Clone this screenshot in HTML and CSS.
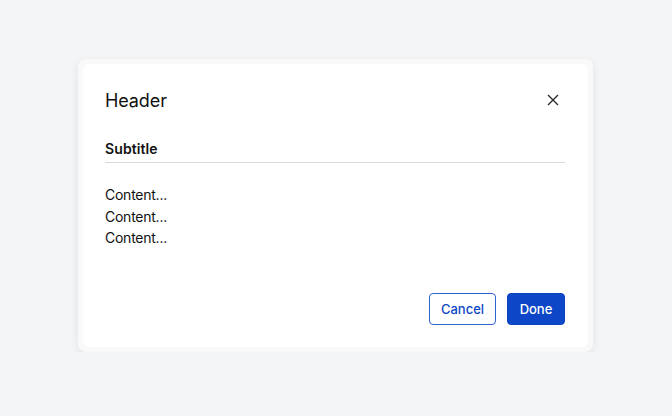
FILE: index.html
```html
<!DOCTYPE html>
<html lang="en">

<head>
    <meta charset="UTF-8">
    <meta name="viewport" content="width=device-width, initial-scale=1.0">
    <link rel="stylesheet" href="styles.css">
</head>

<body>
    <div class="dialog-frame">
        <div class="dialog">
            <div class="dialog-header">
                <h1>Header</h1>
                <button class="close" aria-label="Close">
                    <svg width="12" height="12" viewBox="0 0 12 12">
                        <path d="M1 1 L11 11 M11 1 L1 11" stroke="#2b2b2b" stroke-width="1.4" fill="none" />
                    </svg>
                </button>
            </div>
            <h2 class="subtitle">Subtitle</h2>
            <div class="content">
                <p>Content...</p>
                <p>Content...</p>
                <p>Content...</p>
            </div>
            <div class="actions">
                <button class="cancel">Cancel</button>
                <button class="done">Done</button>
            </div>
        </div>
    </div>
</body>

</html>
```

FILE: styles.css
```css
body {
    margin: 0;
    padding: 59px 0 0 78px;
    background-color: #f4f5f7;
    font-family: Inter, 'Liberation Sans', sans-serif;
    color: #111;
}

.dialog-frame {
    width: 505px;
    padding: 5px;
    background-color: #f9f9fa;
    border-radius: 8px;
    box-shadow: 0 3px 10px rgba(0, 0, 0, .08);
}

.dialog {
    background-color: #fff;
    border-radius: 6px;
    padding: 22px 23px 22px 22px;

    & .dialog-header {
        display: flex;
        align-items: center;
        justify-content: space-between;
        height: 28px;

        & h1 {
            margin: 0;
            font-size: 18px;
            font-weight: 400;
            letter-spacing: -.1px;
        }
    }

    & .close {
        display: flex;
        align-items: center;
        justify-content: center;
        width: 24px;
        height: 24px;
        padding: 0;
        border: none;
        background: none;
    }

    & .subtitle {
        margin: 25px 0 0;
        padding-bottom: 3px;
        border-bottom: 1px solid #d9dadd;
        font-size: 14px;
        line-height: 20px;
        font-weight: 600;
        letter-spacing: .1px;
    }

    & .content {
        margin-top: 21px;
        font-size: 14px;
        line-height: 21.5px;
        letter-spacing: -.25px;

        & p {
            margin: 0;
        }
    }

    & .actions {
        display: flex;
        justify-content: flex-end;
        gap: 11px;
        margin-top: 44px;

        & button {
            height: 32px;
            box-sizing: border-box;
            border-radius: 4px;
            font-family: Inter, 'Liberation Sans', sans-serif;
            font-size: 13px;
            font-weight: 500;
        }

        & .cancel {
            width: 67px;
            border: 1px solid #2f63d1;
            background-color: #fff;
            color: #0d46c5;
        }

        & .done {
            width: 58px;
            border: 1px solid #0b44c2;
            background-color: #0d47c7;
            color: #fff;
        }
    }
}
```
